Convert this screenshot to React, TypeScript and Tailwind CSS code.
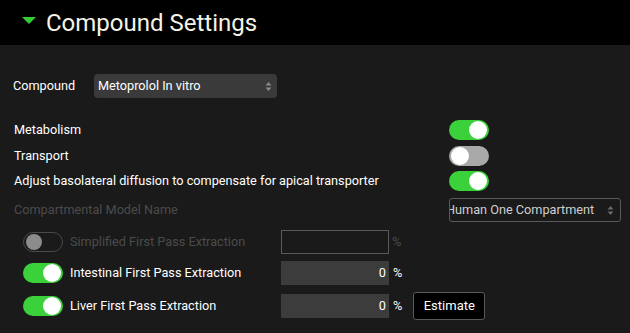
import React from "react";

function Toggle({ state }: { state: "on" | "off" | "disabled" }) {
  if (state === "on") {
    return (
      <div className="w-[40px] h-[20px] rounded-full bg-[#3bd13b] relative shrink-0">
        <div className="absolute right-[2px] top-[1px] w-[18px] h-[18px] rounded-full bg-white" />
      </div>
    );
  }
  if (state === "off") {
    return (
      <div className="w-[40px] h-[20px] rounded-full bg-[#a9a9a9] relative shrink-0">
        <div className="absolute left-[2px] top-[1px] w-[18px] h-[18px] rounded-full bg-white" />
      </div>
    );
  }
  return (
    <div className="w-[40px] h-[20px] rounded-full border border-[#4a4a4a] relative shrink-0">
      <div className="absolute left-[2px] top-[1px] w-[16px] h-[16px] rounded-full bg-[#8c8c8c]" />
    </div>
  );
}

function UpDown({ color }: { color: string }) {
  return (
    <svg width="7" height="11" viewBox="0 0 7 11" className="shrink-0">
      <path d="M3.5 1 L6.5 4.5 L0.5 4.5 Z" fill={color} />
      <path d="M3.5 10 L6.5 6.5 L0.5 6.5 Z" fill={color} />
    </svg>
  );
}

export default function App() {
  return (
    <div
      className="w-[630px] h-[333px] bg-[#1a1a1a] text-[12.7px] text-white overflow-hidden"
      style={{ fontFamily: "Roboto, 'Noto Sans', sans-serif" }}
    >
      <div className="h-[45px] bg-black flex items-center">
        <svg width="14" height="8" viewBox="0 0 14 8" className="ml-[22px] mb-[4px]">
          <path d="M0 0 L14 0 L7 7 Z" fill="#33cc33" />
        </svg>
        <span className="ml-[10px] text-[24px] text-[#f5f3e6] leading-none">Compound Settings</span>
      </div>

      <div className="pl-[13px]">
        <div className="mt-[29px] h-[24px] flex items-center">
          <span className="w-[81px]">Compound</span>
          <div className="w-[183px] h-[24px] rounded-[4px] bg-[#3a3a3a] flex items-center pl-[4px] pr-[5px]">
            <span className="flex-1">Metoprolol In vitro</span>
            <UpDown color="#8a8a8a" />
          </div>
        </div>

        <div className="mt-[22px] h-[20px] flex items-center">
          <span className="w-[436px] pl-[1px]">Metabolism</span>
          <Toggle state="on" />
        </div>
        <div className="mt-[6px] h-[20px] flex items-center">
          <span className="w-[436px] pl-[1px]">Transport</span>
          <Toggle state="off" />
        </div>
        <div className="mt-[5px] h-[20px] flex items-center">
          <span className="w-[436px] pl-[1px]">Adjust basolateral diffusion to compensate for apical transporter</span>
          <Toggle state="on" />
        </div>
        <div className="mt-[7px] h-[24px] flex items-center">
          <span className="w-[436px] pl-[1px] text-[#4b4b4b]">Compartmental Model Name</span>
          <div className="w-[172px] h-[24px] rounded-[3px] border border-[#5a5a5a] flex items-center overflow-hidden pr-[6px]">
            <span className="flex-1 ml-[-4px] text-[#cfcfcf] whitespace-nowrap">Human One Compartment</span>
            <UpDown color="#6a6a6a" />
          </div>
        </div>

        <div className="mt-[8px] h-[24px] flex items-center pl-[10px]">
          <Toggle state="disabled" />
          <span className="ml-[7px] w-[211px] text-[#4b4b4b]">Simplified First Pass Extraction</span>
          <div className="w-[108px] h-[24px] border border-[#5a5a5a]" />
          <span className="ml-[3px] text-[#4b4b4b]">%</span>
        </div>
        <div className="mt-[7px] h-[24px] flex items-center pl-[10px]">
          <Toggle state="on" />
          <span className="ml-[7px] w-[211px]">Intestinal First Pass Extraction</span>
          <div className="w-[108px] h-[24px] bg-[#3c3c3c] flex items-center justify-end pr-[3px]">0</div>
          <span className="ml-[4px]">%</span>
        </div>
        <div className="mt-[9px] h-[24px] flex items-center pl-[10px]">
          <Toggle state="on" />
          <span className="ml-[7px] w-[211px]">Liver First Pass Extraction</span>
          <div className="w-[108px] h-[24px] bg-[#3c3c3c] flex items-center justify-end pr-[3px]">0</div>
          <span className="ml-[4px]">%</span>
          <button className="ml-[11px] w-[72px] h-[28px] bg-black border border-[#5a5a5a] rounded-[3px] text-white text-[13px]">
            Estimate
          </button>
        </div>
      </div>
    </div>
  );
}
